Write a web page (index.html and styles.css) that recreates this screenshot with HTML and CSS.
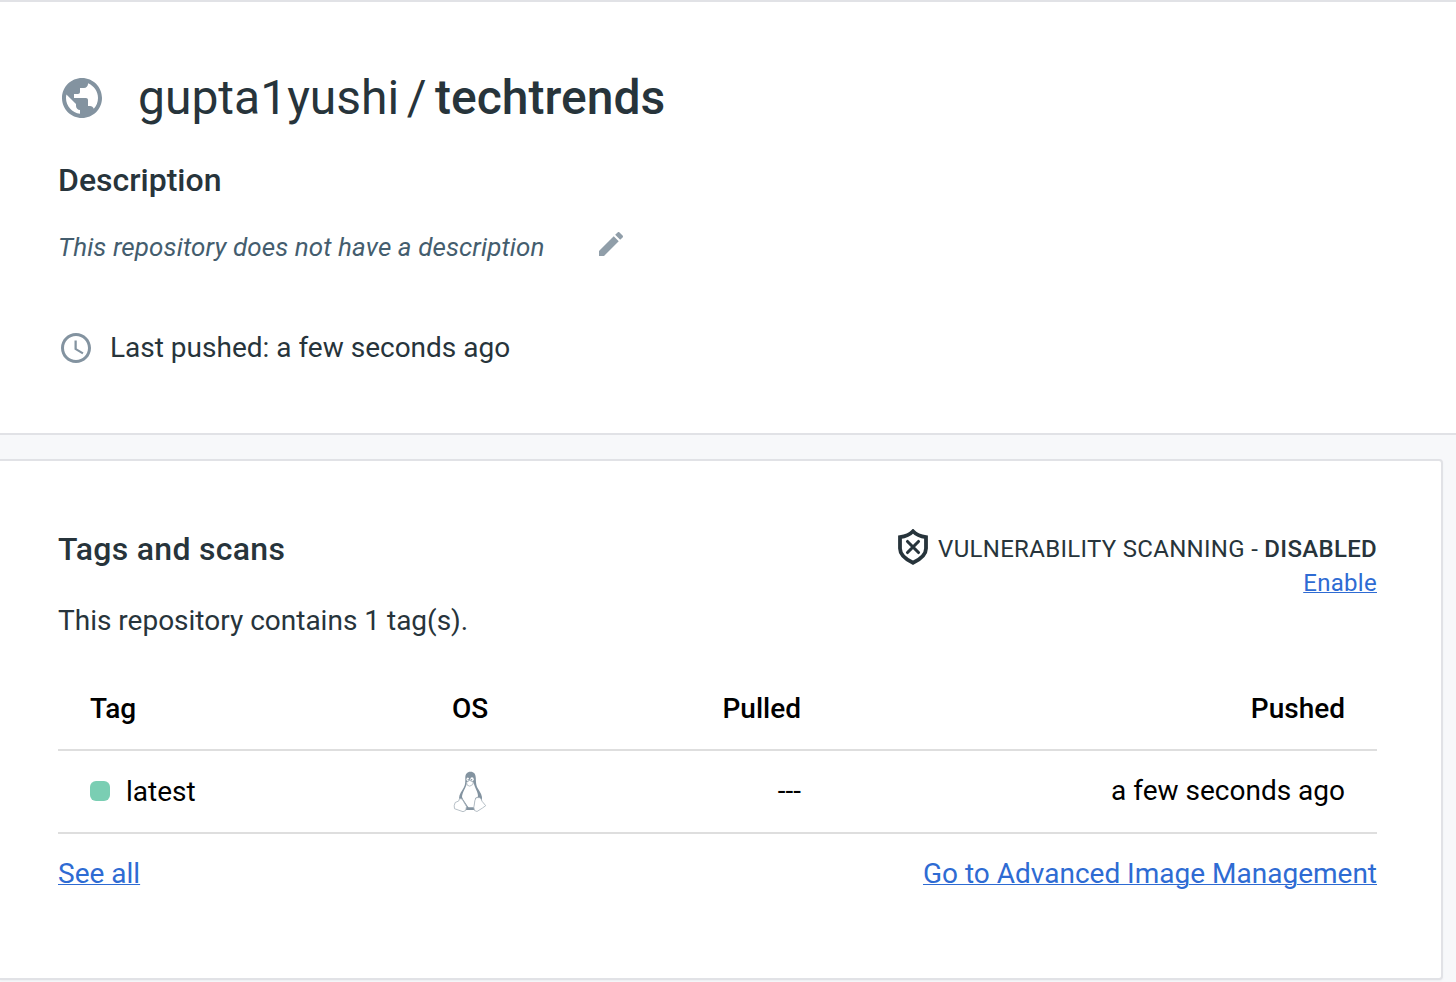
FILE: index.html
```html
<!DOCTYPE html>
<html lang="en">
<head>
<meta charset="utf-8">
<title>gupta1yushi/techtrends</title>
<link rel="stylesheet" href="styles.css">
</head>
<body>
<header class="repo">
  <div class="repo-title">
    <svg class="globe" viewBox="2 2 20 20"><path d="M12 2C6.48 2 2 6.48 2 12s4.48 10 10 10 10-4.48 10-10S17.52 2 12 2zm-1 17.93c-3.95-.49-7-3.85-7-7.93 0-.62.08-1.21.21-1.79L9 15v1c0 1.1.9 2 2 2v1.93zm6.9-2.54c-.26-.81-1-1.39-1.9-1.39h-1v-3c0-.55-.45-1-1-1H8v-2h2c.55 0 1-.45 1-1V7h2c1.1 0 2-.9 2-2v-.41c2.93 1.19 5 4.06 5 7.41 0 2.08-.8 3.97-2.1 5.39z"/></svg>
    <h1><span class="owner">gupta1yushi</span><span class="slash">/</span><span class="name">techtrends</span></h1>
  </div>
  <h2 class="heading">Description</h2>
  <div class="desc">
    <em>This repository does not have a description</em>
    <svg class="pencil" viewBox="3 3 18 18"><path d="M3 17.25V21h3.75L17.81 9.94l-3.75-3.75L3 17.25zM20.71 7.04c.39-.39.39-1.02 0-1.41l-2.34-2.34c-.39-.39-1.02-.39-1.41 0l-1.83 1.83 3.75 3.75 1.83-1.83z"/></svg>
  </div>
  <div class="pushed">
    <svg class="clock" viewBox="2 2 20 20"><path d="M11.99 2C6.47 2 2 6.48 2 12s4.47 10 9.99 10C17.52 22 22 17.52 22 12S17.52 2 11.99 2zM12 20c-4.42 0-8-3.58-8-8s3.58-8 8-8 8 3.58 8 8-3.58 8-8 8zm.5-13H11v6l5.25 3.15.75-1.23-4.5-2.67z"/></svg>
    <span>Last pushed: a few seconds ago</span>
  </div>
</header>
<main class="card">
  <div class="card-head">
    <h2 class="heading tags-heading">Tags and scans</h2>
    <div class="scan">
      <div class="scan-status">
        <svg class="shield" viewBox="0 0 30 36"><path d="M15 2.300C12 5.500 7.500 7.500 2 8.200v11.300c0 6.500 5 10.500 13 14.300 8-3.800 13-7.800 13-14.300V8.200C22.500 7.500 18 5.500 15 2.300z" stroke-width="3.800"/><path d="M9.500 12.500l11 11M20.500 12.500l-11 11" stroke-width="3.100"/></svg>
        <span>VULNERABILITY SCANNING - <b>DISABLED</b></span>
      </div>
      <a class="enable" href="#">Enable</a>
    </div>
  </div>
  <p class="count">This repository contains 1 tag(s).</p>
  <table class="tags">
    <thead><tr><th class="c-tag">Tag</th><th class="c-os">OS</th><th class="c-pulled">Pulled</th><th class="c-pushed">Pushed</th></tr></thead>
    <tbody><tr>
      <td class="c-tag"><span class="tag"><i class="dot"></i><span>latest</span></span></td>
      <td class="c-os"><svg class="tux" viewBox="0 0 34 42">
        <path class="tux-body" d="M17.500.800c-3.500 0-5.200 2.400-5.200 6 0 4 .2 6.700-1.500 9.700C8.800 20 6 23.500 6 27.500l4 8 3 3.500h9l2-6 5-4c.6-4-1.500-7.500-3.800-11-2.200-3.500-2.200-6-2.400-11C22.600 3 21 .8 17.500.8z"/>
        <path class="tux-white" d="M13.700 12.500c-.7 4.500-4.500 8.500-4.700 13.500l1.200 2.500 4.300 6.500 1 1.300h5.500l1.300-9.300 2.700-1.500c.3-4.500-3.300-8.500-4.300-13.500l-3.200 2.500z"/>
        <ellipse class="tux-white" cx="14.800" cy="8.300" rx="1.300" ry="1.900"/><ellipse class="tux-white" cx="19" cy="8.300" rx="1.700" ry="2"/>
        <circle class="tux-body" cx="15.200" cy="8.700" r=".7"/><circle class="tux-body" cx="18.600" cy="8.700" r=".8"/>
        <path class="tux-foot" d="M13.500 11.500l3-2.200 3.800 1.700-.5 2.500-3 1.700-2.500-1z"/>
        <path class="tux-foot" d="M6.500 27.500l2.500.5 4.500 7.500-.8 4-2.700 1.200-8.500-3-.3-3 1-3.200 3.500-1.500zM22 29l1.500-2.500 3 .2 1.500 1 1 2.500 3.700 4.500-3.200 2.300-5.500 3.500-2.500-1-.7-3z"/>
      </svg></td>
      <td class="c-pulled"><span class="lift">---</span></td>
      <td class="c-pushed"><span class="lift">a few seconds ago</span></td>
    </tr></tbody>
  </table>
  <div class="links"><a class="all" href="#">See all</a><a class="manage" href="#">Go to Advanced Image Management</a></div>
</main>
</body>
</html>
```
FILE: styles.css
```css
* { box-sizing: border-box; }
body { margin: 0; height: 982px; overflow: hidden; background: #f7f8fa; color: #27343b; font: 28px/32px Roboto, sans-serif; }
h1, h2, p { margin: 0; font-weight: 400; }
svg { display: block; fill: #8393a0; flex: none; }
a { color: #2e6bd3; text-decoration: underline; text-decoration-thickness: 1px; text-underline-offset: 1px; }
.repo { height: 435px; padding: 68px 58px 0; background: #fff; border-top: 2px solid #e1e2e6; border-bottom: 2px solid #e1e2e6; }
.repo-title { display: flex; align-items: center; height: 56px; padding-left: 4px; }
.globe { width: 40px; height: 40px; margin-right: 36px; }
h1 { font-size: 48px; line-height: 56px; white-space: nowrap; }
.slash { margin: 0 8.500px 0 7.500px; }
.name { font-weight: 500; }
.heading { font-size: 32px; line-height: 40px; font-weight: 500; }
.repo .heading { margin-top: 34px; }
.desc { display: flex; align-items: center; height: 40px; margin-top: 27px; font-size: 26px; letter-spacing: .1px; color: #445d6e; }
.pencil { width: 24px; height: 24px; margin: -6px 0 0 54px; fill: #909ea9; }
.pushed { display: flex; align-items: center; height: 40px; margin-top: 61px; padding-left: 3px; }
.clock { width: 30px; height: 30px; margin-right: 19px; }
.card { width: 1443px; height: 521px; margin-top: 24px; padding: 68px 64px 0 58px; background: #fff; border: 2px solid #e1e2e6; border-left: 0; border-radius: 0 4px 4px 0; box-shadow: 0 1px 2px #eceef1; }
.card-head { display: flex; justify-content: space-between; height: 76px; }
.tags-heading { letter-spacing: .3px; }
.scan { text-align: right; font-size: 24px; line-height: 32px; letter-spacing: .3px; }
.scan-status { display: flex; align-items: center; height: 40px; }
.scan-status b { font-weight: 500; }
.shield { width: 30px; height: 36px; margin: -4px 10px 0 0; fill: none; stroke: #27343b; stroke-linecap: round; }
.enable { display: block; margin-top: -2px; }
.tags { width: 1319px; margin-top: 32px; border-collapse: collapse; table-layout: fixed; color: #000; }
.tags th, .tags td { height: 83px; padding: 0; border-bottom: 2px solid #dedede; font-weight: 400; }
.tags th { height: 81px; font-weight: 500; }
.tags .c-tag { width: 330px; padding-left: 32px; text-align: left; }
.tags .c-os { width: 164px; }
.tags .c-pulled { width: 249px; text-align: right; }
.tags .c-pushed { padding-right: 32px; text-align: right; }
.tag { display: flex; align-items: center; gap: 16px; }
.lift { display: block; padding-bottom: 2px; }
.dot { width: 20px; height: 20px; margin-top: -2px; border-radius: 6px; background: #7aceb3; }
.tux { width: 34px; height: 42px; margin: 0 auto; }
.tux-white { fill: #fff; }
.tux-foot { fill: #fff; stroke: #a5b0b9; stroke-width: .8; }
.links { display: flex; justify-content: space-between; margin-top: 24px; }
```
